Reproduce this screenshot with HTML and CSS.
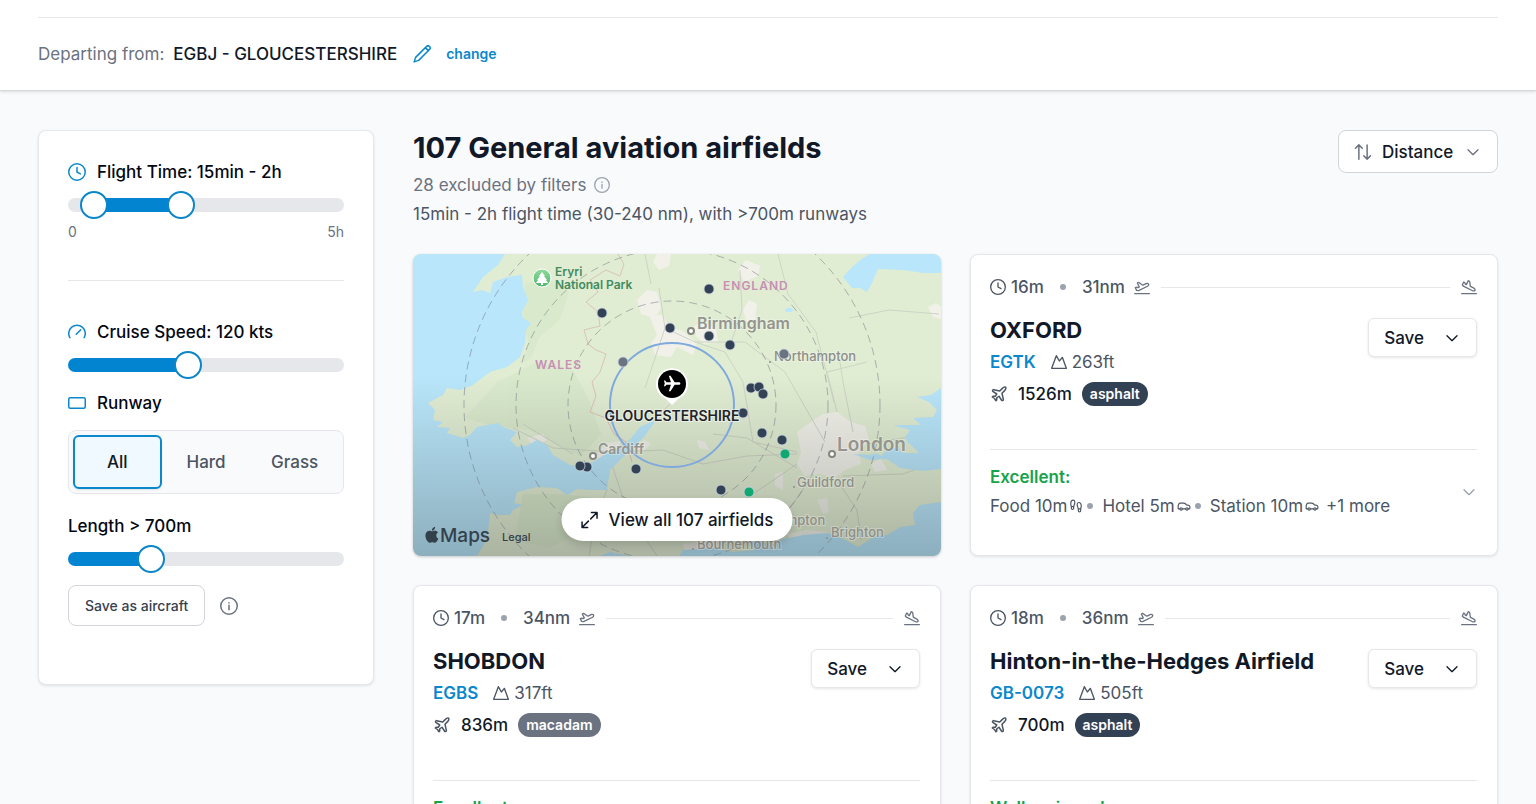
FILE: index.html
```html
<!doctype html>
<html lang="en">
<head>
    <meta charset="utf-8">
    <meta name="viewport" content="width=device-width, initial-scale=1">
    <title>General aviation airfields</title>
    <link rel="stylesheet" href="styles.css">
</head>
<body>
<svg class="sprite" aria-hidden="true">
    <symbol id="i-clock" viewBox="0 0 24 24"><path d="M12 6v6l4.500 2.500M23 12a11 11 0 1 1-22 0 11 11 0 0 1 22 0Z"/></symbol>
    <symbol id="i-pencil" viewBox="0 0 24 24"><path d="M16.500 3.500 18 2a2.600 2.600 0 0 1 4 4L7.500 20.500 1.500 22.500l2-6L16.500 3.500Zm0 0 4 4"/></symbol>
    <symbol id="i-info" viewBox="0 0 24 24"><path d="M12 11v6M12 7.500v.6M23 12a11 11 0 1 1-22 0 11 11 0 0 1 22 0Z"/></symbol>
    <symbol id="i-gauge" viewBox="0 0 24 24"><path d="M2.500 19.500a11 11 0 1 1 19 0M11 15l6-6"/></symbol>
    <symbol id="i-runway" viewBox="0 0 24 24"><rect x="1" y="5" width="22" height="14" rx="2"/></symbol>
    <symbol id="i-sort" viewBox="0 0 24 24"><path d="M2 7 6.500 2.500m0 0L11 7M6.500 2.500v19M22 17l-4.500 4.500m0 0L13 17m4.500 4.500v-19"/></symbol>
    <symbol id="i-chevron" viewBox="0 0 24 24"><path d="m19.500 8.500-7.500 7.500-7.500-7.500"/></symbol>
    <symbol id="i-expand" viewBox="0 0 24 24"><path d="M14.500 2H22v7.500M22 2l-8.500 8.500M9.500 22H2v-7.500M2 22l8.500-8.500"/></symbol>
    <symbol id="i-takeoff" viewBox="0 0 24 24"><path d="M1 22h22M6.360 17.400 4 17l-2-4 1.100-.55a2 2 0 0 1 1.800 0l.17.1a2 2 0 0 0 1.800 0L8 12 5 6l.9-.45a2 2 0 0 1 2.090.2l4.020 3a2 2 0 0 0 2.100.2l4.190-2.060a2.410 2.410 0 0 1 1.730-.17L21 7a1.400 1.400 0 0 1 .87 1.990l-.38.76c-.23.46-.6.84-1.070 1.080L7.580 17.200a2 2 0 0 1-1.220.18Z"/></symbol>
    <symbol id="i-landing" viewBox="0 0 24 24"><path d="M1 22h22M3.770 10.770 2 9l2-4.500 1.100.55c.55.28.9.84.9 1.450s.35 1.170.9 1.450L8 8.500l3-6 1.050.53a2 2 0 0 1 1.090 1.520l.72 5.400a2 2 0 0 0 1.090 1.520l4.400 2.200c.42.22.78.55 1.010.96l.6 1.030c.49.88-.06 1.980-1.060 2.100l-1.180.15c-.47.06-.95-.02-1.370-.24L4.290 11.150a2 2 0 0 1-.52-.38Z"/></symbol>
    <symbol id="i-plane" viewBox="0 0 24 24"><path d="M17.800 19.200 16 11l3.500-3.500C21 6 21.500 4 21 3c-1-.5-3 0-4.500 1.500L13 8 4.800 6.200c-.5-.1-.9.1-1.100.5l-.3.5c-.2.5-.1 1 .3 1.300L9 12l-2 3H4l-1 1 3 2 2 3 1-1v-3l3-2 3.500 5.300c.3.4.8.5 1.300.3l.5-.2c.4-.3.6-.7.5-1.200z"/></symbol>
    <symbol id="i-elevation" viewBox="0 0 24 24"><path d="M1 21.500 8 2.500l4.500 8L17 5l6 16.500Z"/></symbol>
    <symbol id="i-walk" viewBox="0 0 24 24"><path d="M4 16v-2.380C4 11.500 2.970 10.500 3 8c.03-2.720 1.490-6 4.500-6C9.370 2 10 3.800 10 5.500c0 3.110-2 5.660-2 8.680V16a2 2 0 1 1-4 0ZM20 20v-2.380c0-2.120 1.030-3.120 1-5.620-.03-2.720-1.490-6-4.500-6C14.630 6 14 7.800 14 9.500c0 3.110 2 5.660 2 8.680V20a2 2 0 1 0 4 0ZM16 17h4M4 13h4"/></symbol>
    <symbol id="i-car" viewBox="0 0 24 24"><path d="M19 17h2c.6 0 1-.4 1-1v-3c0-.9-.7-1.700-1.500-1.900C18.700 10.600 16 10 16 10s-1.300-1.400-2.200-2.300c-.5-.4-1.100-.7-1.800-.7H5c-.6 0-1.100.4-1.400.9l-1.400 2.900A3.700 3.700 0 0 0 2 12v4c0 .6.4 1 1 1h2M9 17h6"/><circle cx="7" cy="17" r="2"/><circle cx="17" cy="17" r="2"/></symbol>
</svg>

<header class="topbar">
    <div class="departing">
        <span class="muted">Departing from:</span>
        <span class="home">EGBJ - GLOUCESTERSHIRE</span>
        <a class="change" href="#">
            <svg class="icon icon-lg"><use href="#i-pencil"/></svg>
            change
        </a>
    </div>
</header>

<div class="page">
    <aside class="filters">
        <form>
            <label class="filter-label" for="time_min">
                <svg class="icon icon-lg blue"><use href="#i-clock"/></svg>
                Flight Time: 15min - 2h
            </label>
            <div class="dual" style="--from: 10%; --to: 41%">
                <input type="range" id="time_min" min="0" max="300" step="15" value="15">
                <input type="range" id="time_max" aria-label="Maximum flight time" min="0" max="300" step="15" value="120">
            </div>
            <div class="scale"><span>0</span><span>5h</span></div>
            <hr>
            <label class="filter-label" for="speed">
                <svg class="icon icon-lg blue"><use href="#i-gauge"/></svg>
                Cruise Speed: 120 kts
            </label>
            <input class="slider" type="range" id="speed" min="60" max="200" value="120" style="--to: 43%">
            <div class="filter-label runway">
                <svg class="icon icon-lg blue"><use href="#i-runway"/></svg>
                Runway
            </div>
            <div class="segmented">
                <button type="button" class="active">All</button>
                <button type="button">Hard</button>
                <button type="button">Grass</button>
            </div>
            <label class="filter-label" for="length">Length &gt; 700m</label>
            <input class="slider" type="range" id="length" min="0" max="2500" value="700" style="--to: 28%">
            <div class="save-aircraft">
                <button type="button">Save as aircraft</button>
                <svg class="icon icon-lg"><use href="#i-info"/></svg>
            </div>
        </form>
    </aside>

    <main>
        <div class="results-head">
            <div>
                <h1>107 General aviation airfields</h1>
                <p class="excluded">28 excluded by filters <svg class="icon"><use href="#i-info"/></svg></p>
                <p class="summary">15min - 2h flight time (30-240 nm), with &gt;700m runways</p>
            </div>
            <div class="sort">
                <svg class="icon icon-lg sort-icon"><use href="#i-sort"/></svg>
                <select aria-label="Sort by">
                    <option>Distance</option>
                </select>
                <svg class="icon sort-chevron"><use href="#i-chevron"/></svg>
            </div>
        </div>

        <div class="grid">
            <section class="map">
                <svg class="map-canvas" viewBox="0 0 528 302" preserveAspectRatio="xMidYMid slice">
                    <defs>
                        <linearGradient id="shade" x1="0" y1="0" x2="0" y2="1">
                            <stop offset=".4" stop-color="#000" stop-opacity="0"/>
                            <stop offset="1" stop-color="#000" stop-opacity=".24"/>
                        </linearGradient>
                        <linearGradient id="tree" x1="0" y1="0" x2="0" y2="1">
                            <stop offset="0" stop-color="#8fdc9b"/>
                            <stop offset="1" stop-color="#4fb56d"/>
                        </linearGradient>
                    </defs>
                    <rect class="land" width="528" height="302"/>
                    <g class="hills">
                        <path d="M112 30l24-6 20 14-8 26-22 20-8 20-10 6 8-20-6-26z"/>
                        <path d="M84 128l40-20 36 8 16 30 12 34-20 22-28-14-24-12-36-4-28-8z"/>
                        <path d="M110 240l40 0 30 4-4 30-40 20-34-8z"/>
                    </g>
                    <g class="towns">
                        <path d="M236 61l14 0 6 12 14 4 14 12-4 12-16-8-6 10-16-2-4-12 6-8z"/>
                        <path d="M281 72l10-4 12 8 2 12-14 2-8-8z"/>
                        <path d="M224 46l10-10 10 2 4 16-6 10-14-4z"/>
                        <path d="M325 16l8-10 14 6-2 10-14 6z"/>
                        <path d="M330 56l6-10 8 4-2 16-8 2z"/>
                        <path d="M244 0h14l-2 12-10 4-6-8z"/>
                        <path d="M515 53l8-4 5 4v12l-8-2z"/>
                        <path d="M384 178l14-10 12-8 14-2 14 10 14 4 4 14-10 12 2 12-16 6-10 8-16-4-14 2-8-12 4-12z"/>
                        <path d="M362 220l8-2v18l-8-4zM284 186l8 2 4 8-10-2z"/>
                        <path d="M114 184l16-4 4 6-14 6zM180 205l14-16 14-2-4 10-18 12z"/>
                        <path d="M458 210l10-6 6 12-12 2zM374 280l20-4 20 2-4 6-32 4zM270 290l34-6 6 10-38 4z"/>
                        <path d="M404 246l10-2 2 14-6 2zM220 192l12-6 6 4-8 8z"/>
                    </g>
                    <g class="roads">
                        <path d="M246 34l6 40 30 14 50 0 40 30 40 70M327 16l2 40-10 30M365 0l10 40 28 38 18 70M252 74l-20 60M238 30l-6-30M282 88l30 10 18 30 10 60 44 10M384 200l-50 2-44 8-40-14-50 2-60-4-40-20"/>
                        <path d="M424 158l-10-40 40-10M440 178l-10-50-4-26M454 190l60-10M430 222l60-2 38-14M424 226l20 30 4 30M400 220l-20 30-30 38M384 210l-44 30-60 36M194 236l-12 30-6 36M194 196l20 60 30 46M110 170l50 30M259 148l-30 30-30 20M436 64l40-8 50 4M300 180l34 4 50 30"/>
                    </g>
                    <path class="border" d="M205 0l6 10-4 12-14-6-16 10 8 12-12 10 12 10 2 14-16 4 4 14 8 6 10 4-6 18-8 10 4 14-6 16 16 6 8 16 12 8 6 20"/>
                    <g class="sea">
                        <path d="M0 0H92L85 11 70 23 60 38 69 36 77 39 80 28 94 23 109 21 110 33 115 46 109 58 110 64 118 69 113 76 112 89 107 103 94 113 77 118 60 131 47 136 34 134 30 141 15 149 22 156 20 166 30 168 24 173 37 174 34 179 50 184 57 181 64 173 74 171 85 169 90 173 104 178 97 186 104 193 115 191 124 186 134 191 140 201 157 211 170 213 180 208 194 199 204 196 214 189 227 173 244 165 231 183 217 196 204 209 197 216 194 236 177 236 164 235 154 241 144 234 124 233 104 238 101 249 110 251 100 256 97 261 85 261 77 259 75 279 72 289 64 302H0Z"/>
                        <path d="M430 23L439 13 450 4 457 0H528V19L510 19 490 16 465 15 459 29 454 38 447 34 439 34Z"/>
                        <path d="M528 134L518 141 504 143 516 148 524 156 520 163 500 164 508 171 480 171 497 176 492 183 495 189 474 197 457 201 440 200 457 206 474 205 487 214 510 217 528 215Z"/>
                        <path d="M528 248L507 251 500 259 502 271 487 273 474 281 461 283 445 293 427 283 414 279 390 281 367 286 357 293 350 286 336 288 342 296 320 298 300 294 270 296 266 302H528ZM187 302L197 298 216 302Z"/>
                        <ellipse cx="376" cy="56" rx="4" ry="2"/>
                    </g>
                    <path class="land" d="M482 191l14-2 10 10-16 0zM460 197l12 1-4 4z"/>
                    <rect class="shade" width="528" height="302" fill="url(#shade)"/>
                    <g class="rings">
                        <circle cx="259" cy="151" r="104"/>
                        <circle cx="259" cy="151" r="156"/>
                        <circle cx="259" cy="151" r="208"/>
                    </g>
                    <circle class="range" cx="259" cy="151" r="62"/>
                    <g class="region">
                        <text x="122" y="115">WALES</text>
                        <text x="310" y="36">ENGLAND</text>
                    </g>
                    <g class="park">
                        <circle cx="129" cy="24" r="9" fill="url(#tree)"/>
                        <path d="M129 18l3 4h-1l3 4h-1l2 3h-5v2h-2v-2h-5l2-3h-1l3-4h-1z"/>
                        <text x="142" y="22">Eryri</text>
                        <text x="142" y="35">National Park</text>
                    </g>
                    <g class="city">
                        <circle cx="278" cy="77" r="3"/>
                        <circle cx="180" cy="202" r="3"/>
                        <circle cx="419" cy="200" r="3"/>
                        <text x="284" y="75" font-size="16">Birmingham</text>
                        <text x="185" y="200" font-size="14">Cardiff</text>
                        <text x="424" y="197" font-size="19" font-weight="600">London</text>
                    </g>
                    <g class="town">
                        <circle cx="357" cy="108" r="1"/>
                        <circle cx="381" cy="233" r="1"/>
                        <circle cx="414" cy="284" r="1"/>
                        <circle cx="280" cy="295" r="1"/>
                        <text x="361" y="107">Northampton</text>
                        <text x="384" y="233">Guildford</text>
                        <text x="329" y="271">Southampton</text>
                        <text x="418" y="283">Brighton</text>
                        <text x="284" y="295">Bournemouth</text>
                    </g>
                    <g class="pins">
                        <circle cx="296" cy="35" r="5"/>
                        <circle cx="189" cy="59" r="5"/>
                        <circle cx="257" cy="74" r="5"/>
                        <circle cx="296" cy="82" r="5"/>
                        <circle cx="317" cy="91" r="5"/>
                        <circle class="grey" cx="210" cy="108" r="5"/>
                        <circle class="grey" cx="371" cy="100" r="5"/>
                        <circle cx="338" cy="134" r="5"/>
                        <circle cx="346" cy="133" r="5"/>
                        <circle cx="350" cy="140" r="5"/>
                        <circle cx="330" cy="159" r="5"/>
                        <circle cx="349" cy="179" r="5"/>
                        <circle cx="369" cy="186" r="5"/>
                        <circle class="green" cx="372" cy="200" r="5"/>
                        <circle class="green" cx="336" cy="238" r="5"/>
                        <circle cx="308" cy="236" r="5"/>
                        <circle cx="223" cy="215" r="5"/>
                        <circle cx="174" cy="213" r="5"/>
                        <circle cx="167" cy="212" r="5"/>
                    </g>
                    <text class="home-label" x="259" y="167">GLOUCESTERSHIRE</text>
                    <g class="home-pin">
                        <path class="pin-rim" d="M259 151l-6-6a16 16 0 1 1 12 0z"/>
                        <circle cx="259" cy="130" r="14"/>
                        <path class="pin-plane" transform="translate(269 120) rotate(90) scale(.82)" d="M21 16v-2l-8-5V3.500c0-.83-.67-1.500-1.500-1.500S10 2.670 10 3.500V9l-8 5v2l8-2.500V19l-2 1.500V22l3.500-1 3.500 1v-1.500L13 19v-5.500l8 2.500z"/>
                    </g>
                    <g class="credit">
                        <path transform="translate(11 273) scale(.66)" d="M12.152 6.896c-.948 0-2.415-1.078-3.960-1.040-2.040.027-3.910 1.183-4.961 3.014-2.117 3.675-.546 9.103 1.519 12.090 1.013 1.454 2.208 3.090 3.792 3.039 1.520-.065 2.090-.987 3.935-.987 1.831 0 2.350.987 3.960.948 1.637-.026 2.676-1.480 3.676-2.948 1.156-1.688 1.636-3.325 1.662-3.415-.039-.013-3.182-1.221-3.220-4.857-.026-3.040 2.480-4.494 2.597-4.559-1.429-2.090-3.623-2.324-4.390-2.376-2-.156-3.675 1.090-4.610 1.090zM15.530 3.830c.843-1.012 1.400-2.427 1.245-3.830-1.207.052-2.662.805-3.532 1.818-.78.896-1.454 2.338-1.273 3.714 1.338.104 2.715-.688 3.559-1.701"/>
                        <text x="27" y="288" font-size="19">Maps</text>
                        <text x="89" y="287" font-size="11">Legal</text>
                    </g>
                </svg>
                <button type="button" class="view-all">
                    <svg class="icon icon-lg"><use href="#i-expand"/></svg>
                    View all 107 airfields
                </button>
            </section>

            <article class="card">
                <div class="route">
                    <svg class="icon"><use href="#i-clock"/></svg>
                    <span>16m</span>
                    <i class="dot"></i>
                    <span>31nm</span>
                    <svg class="icon takeoff"><use href="#i-takeoff"/></svg>
                    <i class="line"></i>
                    <svg class="icon landing"><use href="#i-landing"/></svg>
                </div>
                <div class="info">
                    <div>
                        <h2>OXFORD</h2>
                        <p class="code"><a href="#">EGTK</a> <svg class="icon"><use href="#i-elevation"/></svg> 263ft</p>
                        <p class="strip"><svg class="icon icon-lg"><use href="#i-plane"/></svg> <b>1526m</b> <span class="badge">asphalt</span></p>
                    </div>
                    <button type="button" class="save">Save <svg class="icon"><use href="#i-chevron"/></svg></button>
                </div>
                <div class="nearby">
                    <div>
                        <h3>Excellent:</h3>
                        <p>
                            <span>Food 10m<svg class="icon icon-sm"><use href="#i-walk"/></svg></span>
                            <i class="dot"></i>
                            <span>Hotel 5m<svg class="icon icon-sm"><use href="#i-car"/></svg></span>
                            <i class="dot"></i>
                            <span>Station 10m<svg class="icon icon-sm"><use href="#i-car"/></svg></span>
                            <span class="more">+1 more</span>
                        </p>
                    </div>
                    <svg class="icon"><use href="#i-chevron"/></svg>
                </div>
            </article>

            <article class="card">
                <div class="route">
                    <svg class="icon"><use href="#i-clock"/></svg>
                    <span>17m</span>
                    <i class="dot"></i>
                    <span>34nm</span>
                    <svg class="icon takeoff"><use href="#i-takeoff"/></svg>
                    <i class="line"></i>
                    <svg class="icon landing"><use href="#i-landing"/></svg>
                </div>
                <div class="info">
                    <div>
                        <h2>SHOBDON</h2>
                        <p class="code"><a href="#">EGBS</a> <svg class="icon"><use href="#i-elevation"/></svg> 317ft</p>
                        <p class="strip"><svg class="icon icon-lg"><use href="#i-plane"/></svg> <b>836m</b> <span class="badge light">macadam</span></p>
                    </div>
                    <button type="button" class="save">Save <svg class="icon"><use href="#i-chevron"/></svg></button>
                </div>
                <div class="nearby">
                    <h3>Excellent:</h3>
                </div>
            </article>

            <article class="card">
                <div class="route">
                    <svg class="icon"><use href="#i-clock"/></svg>
                    <span>18m</span>
                    <i class="dot"></i>
                    <span>36nm</span>
                    <svg class="icon takeoff"><use href="#i-takeoff"/></svg>
                    <i class="line"></i>
                    <svg class="icon landing"><use href="#i-landing"/></svg>
                </div>
                <div class="info">
                    <div>
                        <h2>Hinton-in-the-Hedges Airfield</h2>
                        <p class="code"><a href="#">GB-0073</a> <svg class="icon"><use href="#i-elevation"/></svg> 505ft</p>
                        <p class="strip"><svg class="icon icon-lg"><use href="#i-plane"/></svg> <b>700m</b> <span class="badge">asphalt</span></p>
                    </div>
                    <button type="button" class="save">Save <svg class="icon"><use href="#i-chevron"/></svg></button>
                </div>
                <div class="nearby">
                    <h3>Well reviewed:</h3>
                </div>
            </article>
        </div>
    </main>
</div>
</body>
</html>
```
FILE: styles.css
```css
* {
    box-sizing: border-box;
}

html {
    height: 100%;
}

body {
    margin: 0;
    height: 100%;
    overflow: hidden;
    background-color: #f9fafc;
    color: #111827;
    font-family: Inter, "Liberation Sans", sans-serif;
    font-size: 17px;
    line-height: 24px;
}

h1, h2, h3, p {
    margin: 0;
}

a {
    color: #0b88cc;
    text-decoration: none;
}

button, select {
    font: inherit;
    color: inherit;
    cursor: pointer;
}

.sprite {
    display: none;
}

.icon {
    flex: none;
    width: 16px;
    height: 16px;
    fill: none;
    stroke: currentColor;
    stroke-width: 2;
    stroke-linecap: round;
    stroke-linejoin: round;
}

.icon-lg {
    width: 18px;
    height: 18px;
}

.icon-sm {
    width: 14px;
    height: 14px;
}

.blue {
    color: #0b88cc;
}

.dot {
    flex: none;
    width: 6px;
    height: 6px;
    border-radius: 50%;
    background-color: #9ca3af;
}

/* top bar */

.topbar {
    padding: 17px 38px 0;
    background-color: #fff;
    border-bottom: 1px solid #d3dadc;
    box-shadow: 0 1px 3px rgba(0, 0, 0, 0.12);
}

.departing {
    display: flex;
    align-items: center;
    gap: 9px;
    height: 73px;
    border-top: 1px solid #e5e7eb;
}

.muted {
    color: #6b7280;
}

.home {
    font-weight: 500;
}

.change {
    display: flex;
    align-items: center;
    gap: 15px;
    margin-left: 7px;
    font-size: 14px;
    font-weight: 600;
}

/* layout */

.page {
    display: flex;
    align-items: flex-start;
    gap: 39px;
    padding: 39px 38px;
}

main {
    flex: 1;
    min-width: 0;
}

/* filters */

.filters {
    flex: none;
    width: 336px;
    padding: 29px 29px 58px;
    background-color: #fff;
    border: 1px solid #e5e7eb;
    border-radius: 8px;
    box-shadow: 0 1px 3px rgba(0, 0, 0, 0.1);
}

.filter-label {
    display: flex;
    align-items: center;
    gap: 11px;
    margin-bottom: 7px;
    font-weight: 500;
    color: #030712;
}

.runway {
    margin: 12px 0 15px;
}

input[type=range] {
    -webkit-appearance: none;
    appearance: none;
    display: block;
    width: 100%;
    height: 28px;
    margin: 0;
    background: none;
}

input[type=range]::-webkit-slider-thumb {
    -webkit-appearance: none;
    appearance: none;
    width: 28px;
    height: 28px;
    margin-top: -7px;
    border: 2px solid #0c86c9;
    border-radius: 50%;
    background-color: #fff;
    pointer-events: auto;
}

.slider::-webkit-slider-runnable-track {
    height: 14px;
    border-radius: 7px;
    background: linear-gradient(to right, #0284d0 var(--to), #e5e7eb var(--to));
}

.dual {
    position: relative;
    height: 28px;
}

.dual::before {
    content: "";
    position: absolute;
    inset: 7px 0;
    border-radius: 7px;
    background: linear-gradient(to right, #e5e7eb var(--from), #0284d0 var(--from), #0284d0 var(--to), #e5e7eb var(--to));
}

.dual input[type=range] {
    position: absolute;
    inset: 0;
    pointer-events: none;
}

.dual input::-webkit-slider-runnable-track {
    height: 14px;
}

.scale {
    display: flex;
    justify-content: space-between;
    margin-top: 3px;
    color: #6b7280;
    font-size: 14px;
    line-height: 20px;
}

.filters hr {
    margin: 38px 0 39px;
    border: none;
    border-top: 1px solid #e5e7eb;
}

.segmented {
    display: flex;
    margin-bottom: 20px;
    padding: 4px;
    background-color: #f9fafb;
    border: 1px solid #e5e7eb;
    border-radius: 8px;
}

.segmented button {
    flex: 1;
    height: 54px;
    padding: 0;
    border: 2px solid transparent;
    border-radius: 6px;
    background: none;
    color: #4b5563;
    font-weight: 500;
}

.segmented .active {
    border-color: #0b88cc;
    background-color: #f0f9ff;
    color: #111827;
    box-shadow: 0 1px 2px rgba(0, 0, 0, 0.1);
}

.save-aircraft {
    display: flex;
    align-items: center;
    gap: 15px;
    margin-top: 12px;
    color: #6b7280;
}

.save-aircraft button {
    height: 41px;
    padding: 0 16px;
    background-color: #fff;
    border: 1px solid #d1d5db;
    border-radius: 8px;
    color: #374151;
    font-size: 14px;
    font-weight: 500;
}

/* results */

.results-head {
    display: flex;
    justify-content: space-between;
    align-items: flex-start;
    margin-bottom: 28px;
}

h1 {
    font-size: 29px;
    line-height: 36px;
    font-weight: 700;
}

.excluded {
    display: flex;
    align-items: center;
    gap: 8px;
    margin: 7px 0 5px;
    color: #6b7280;
}

.excluded .icon {
    color: #9ca3af;
}

.summary {
    color: #4b5563;
}

.sort {
    position: relative;
}

.sort select {
    appearance: none;
    height: 43px;
    padding: 0 43px;
    background-color: #fff;
    border: 1px solid #d1d5db;
    border-radius: 8px;
    font-weight: 500;
}

.sort .icon {
    position: absolute;
    top: 50%;
    transform: translateY(-50%);
    color: #6b7280;
    pointer-events: none;
}

.sort .sort-icon {
    left: 16px;
}

.sort .sort-chevron {
    right: 17px;
}

.grid {
    display: grid;
    grid-template-columns: 1fr 1fr;
    gap: 29px;
}

.card {
    padding: 20px 20px 17px 19px;
    background-color: #fff;
    border: 1px solid #e5e7eb;
    border-radius: 8px;
    box-shadow: 0 1px 3px rgba(0, 0, 0, 0.1);
}

.route {
    display: flex;
    align-items: center;
    gap: 5px;
    margin-bottom: 17px;
    color: #4b5563;
    font-weight: 500;
}

.route .dot {
    margin: 0 11px;
}

.takeoff, .landing {
    color: #6b7280;
}

.route .takeoff {
    margin-left: 4px;
}

.route .line {
    flex: 1;
    margin: 0 6px;
    border-top: 1px solid #e5e7eb;
}

.info {
    display: flex;
    justify-content: space-between;
    align-items: flex-start;
    min-height: 134px;
    border-bottom: 1px solid #e5e7eb;
}

h2 {
    font-size: 22px;
    line-height: 28px;
    font-weight: 700;
}

.code, .strip {
    display: flex;
    align-items: center;
    margin-top: 6px;
    color: #4b5563;
}

.code {
    gap: 5px;
}

.code a {
    margin-right: 10px;
    font-weight: 600;
}

.strip {
    gap: 10px;
    margin-top: 8px;
}

.strip b {
    color: #111827;
    font-weight: 500;
}

.badge {
    padding: 0 8px;
    border-radius: 12px;
    background-color: #334155;
    color: #fff;
    font-size: 14px;
    font-weight: 600;
}

.badge.light {
    background-color: #6b7280;
}

.save {
    display: flex;
    align-items: center;
    gap: 20px;
    height: 39px;
    margin-top: 2px;
    padding: 0 16px 0 15px;
    background-color: #fff;
    border: 1px solid #e5e7eb;
    border-radius: 6px;
    box-shadow: 0 1px 3px rgba(0, 0, 0, 0.1);
    font-weight: 500;
}

.nearby {
    display: flex;
    justify-content: space-between;
    align-items: center;
    padding: 15px 0 20px;
    color: #9ca3af;
}

h3 {
    margin-bottom: 5px;
    color: #16a34a;
    font-size: 17px;
    font-weight: 600;
}

.nearby p {
    display: flex;
    align-items: center;
    color: #4b5563;
}

.nearby span {
    display: flex;
    align-items: center;
    gap: 2px;
}

.nearby .dot {
    margin: 0 9px 0 4px;
}

.nearby .more {
    margin-left: 7px;
}

/* map */

.map {
    position: relative;
    border-radius: 8px;
    overflow: hidden;
    box-shadow: 0 1px 3px rgba(0, 0, 0, 0.2);
}

.map-canvas {
    position: absolute;
    inset: 0;
    width: 100%;
    height: 100%;
}

.land {
    fill: #e1edd3;
}

.hills {
    fill: #d5e8c9;
    opacity: 0.6;
}

.towns {
    fill: #f1f1ea;
}

.roads {
    fill: none;
    stroke: #cdd4c4;
    stroke-width: 1;
    stroke-linejoin: round;
}

.border {
    fill: none;
    stroke: #d9c3bb;
    stroke-width: 1;
}

.sea {
    fill: #b9e6fa;
}

.rings circle {
    fill: none;
    stroke: #6b7280;
    stroke-opacity: 0.5;
    stroke-width: 1;
    stroke-dasharray: 8 5;
}

.range {
    fill: none;
    stroke: #7fa9dc;
    stroke-width: 2;
}

.region text {
    fill: #c78fb4;
    font-size: 12px;
    font-weight: 600;
    letter-spacing: 1px;
}

.park text {
    fill: #3f8c62;
    font-size: 12px;
    font-weight: 600;
}

.park circle {
    stroke: #fff;
    stroke-width: 1;
}

.park path {
    fill: #fff;
}

.city {
    fill: #94958e;
    font-weight: 600;
}

.city circle {
    fill: #fff;
    stroke: #85867f;
    stroke-width: 2;
}

.town {
    fill: #8d8e88;
    font-size: 13px;
    font-weight: 500;
}

.city text, .town text {
    paint-order: stroke;
    stroke: rgba(255, 255, 255, 0.3);
    stroke-width: 2px;
}

.pins circle {
    fill: #334155;
    stroke: rgba(203, 213, 225, 0.8);
    stroke-width: 1;
}

.pins .grey {
    fill: #6b7280;
}

.pins .green {
    fill: #10a870;
}

.home-label {
    fill: #1f2328;
    font-size: 14px;
    font-weight: 600;
    text-anchor: middle;
    paint-order: stroke;
    stroke: rgba(255, 255, 255, 0.5);
    stroke-width: 2px;
}

.pin-rim, .pin-plane {
    fill: #fff;
}

.credit {
    fill: #33414b;
    font-weight: 500;
}

.view-all {
    position: absolute;
    left: 50%;
    bottom: 15px;
    transform: translateX(-50%);
    display: flex;
    align-items: center;
    gap: 10px;
    height: 43px;
    padding: 0 19px;
    border: none;
    border-radius: 22px;
    background-color: #fff;
    box-shadow: 0 4px 8px rgba(0, 0, 0, 0.15);
    font-weight: 500;
    white-space: nowrap;
}
```
